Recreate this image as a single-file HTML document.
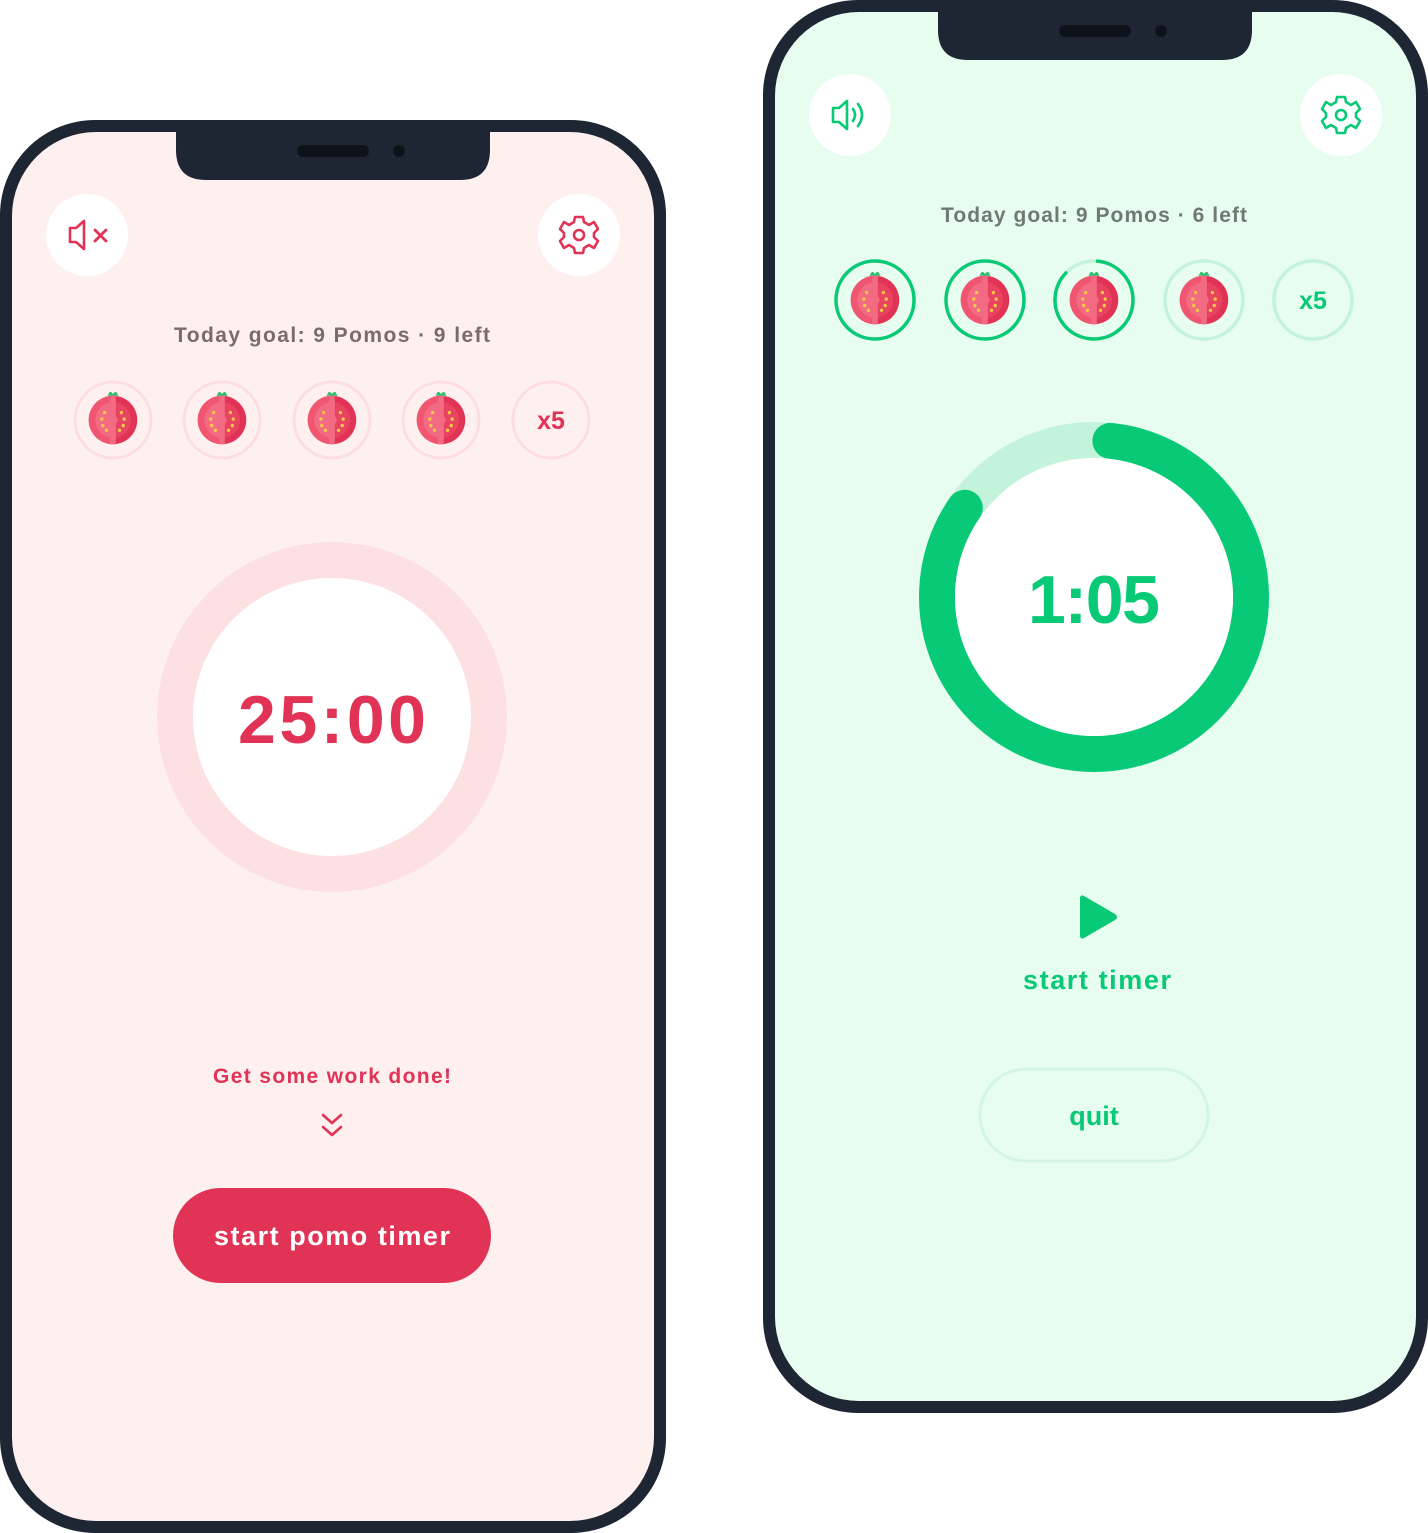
<!DOCTYPE html>
<html><head><meta charset="utf-8"><style>
html,body{margin:0;padding:0;background:#fff;}
svg{display:block}
text{font-family:"Liberation Sans",sans-serif;font-weight:bold}
</style></head><body>
<svg width="1428" height="1533" viewBox="0 0 1428 1533" xmlns="http://www.w3.org/2000/svg">
<defs>
<symbol id="tom" viewBox="-30 -30 60 60">
<path d="M-6 -26 L-3 -31 L0 -28 L3 -31 L6 -26 Z" fill="#2fbf71"/>
<circle r="26" fill="#e03355"/>
<path d="M0 -26 A26 26 0 0 0 0 26 Z" fill="#f0566f"/>
<circle r="19" fill="#f26b82"/>
<path d="M0 -19 A19 19 0 0 1 0 19 Z" fill="#e8445f"/>
<rect x="-3" y="-26" width="6" height="52" fill="#f26b82"/>
<circle r="5" fill="#f26b82"/>
<g fill="#f7c948">
<circle cx="-9" cy="-8" r="1.8"/><circle cx="-12" cy="-1" r="1.8"/><circle cx="-11" cy="6" r="1.8"/><circle cx="-7" cy="11" r="1.8"/>
<circle cx="9" cy="-8" r="1.8"/><circle cx="12" cy="-1" r="1.8"/><circle cx="11" cy="6" r="1.8"/><circle cx="7" cy="11" r="1.8"/>
</g>
</symbol>
</defs>

<!-- LEFT PHONE -->
<rect x="0" y="120" width="666" height="1413" rx="95" fill="#1f2633"/>
<rect x="12" y="132" width="642" height="1389" rx="84" fill="#fff0f0"/>
<path d="M176 132 H490 V150 Q490 180 460 180 H206 Q176 180 176 150 Z" fill="#1f2633"/>
<rect x="297" y="145" width="72" height="12" rx="6" fill="#0e131b"/>
<circle cx="399" cy="151" r="6" fill="#0e131b"/>

<circle cx="87" cy="235" r="41" fill="#fff"/>
<path d="M70 228 H76 L84 221 V249 L76 242 H70 Z" fill="none" stroke="#e03355" stroke-width="2.6" stroke-linejoin="round"/>
<path d="M95 230 L106 241 M106 230 L95 241" stroke="#e03355" stroke-width="2.8" stroke-linecap="round"/>
<circle cx="579" cy="235" r="41" fill="#fff"/>
<g transform="translate(579,235)" fill="none" stroke="#e03355" stroke-width="2.6">
<path d="M-4 -18 L4 -18 L5 -13 L10 -10 L15 -13 L19 -6 L15 -2 L15 2 L19 6 L15 13 L10 10 L5 13 L4 18 L-4 18 L-5 13 L-10 10 L-15 13 L-19 6 L-15 2 L-15 -2 L-19 -6 L-15 -13 L-10 -10 L-5 -13 Z" stroke-linejoin="round"/>
<circle r="5"/>
</g>

<text x="332" y="342" font-size="21" fill="#7b6a6c" text-anchor="middle" textLength="316">Today goal:  9 Pomos ·  9 left</text>

<g fill="none" stroke="#fcdede" stroke-width="3">
<circle cx="113" cy="420" r="38"/><circle cx="222" cy="420" r="38"/><circle cx="332" cy="420" r="38"/><circle cx="441" cy="420" r="38"/><circle cx="551" cy="420" r="38"/>
</g>
<use href="#tom" x="85" y="392" width="56" height="56"/>
<use href="#tom" x="194" y="392" width="56" height="56"/>
<use href="#tom" x="304" y="392" width="56" height="56"/>
<use href="#tom" x="413" y="392" width="56" height="56"/>
<text x="551" y="429" font-size="25" fill="#e03355" text-anchor="middle">x5</text>

<circle cx="332" cy="717" r="175" fill="#fde1e2"/>
<circle cx="332" cy="717" r="139" fill="#fff"/>
<text x="332" y="743" font-size="68" fill="#e03355" text-anchor="middle" textLength="188">25:00</text>

<text x="332" y="1083" font-size="21" fill="#e03355" text-anchor="middle" textLength="238">Get some work done!</text>
<path d="M323 1115 L332 1123 L341 1115 M323 1127 L332 1135 L341 1127" fill="none" stroke="#e03355" stroke-width="2.6" stroke-linecap="round" stroke-linejoin="round"/>

<rect x="173" y="1188" width="318" height="95" rx="47.5" fill="#e03355"/>
<text x="332" y="1245" font-size="27" fill="#fff" text-anchor="middle" textLength="236">start pomo timer</text>

<!-- RIGHT PHONE -->
<rect x="763" y="0" width="665" height="1413" rx="95" fill="#1f2633"/>
<rect x="775" y="12" width="641" height="1389" rx="84" fill="#e6fdf0"/>
<path d="M938 12 H1252 V30 Q1252 60 1222 60 H968 Q938 60 938 30 Z" fill="#1f2633"/>
<rect x="1059" y="25" width="72" height="12" rx="6" fill="#0e131b"/>
<circle cx="1161" cy="31" r="6" fill="#0e131b"/>

<circle cx="850" cy="115" r="41" fill="#fff"/>
<path d="M833 108 H839 L847 101 V129 L839 122 H833 Z" fill="none" stroke="#08c975" stroke-width="2.6" stroke-linejoin="round"/>
<path d="M853 109 Q857 115 853 121 M858 104 Q866 115 858 126" fill="none" stroke="#08c975" stroke-width="2.6" stroke-linecap="round"/>
<circle cx="1341" cy="115" r="41" fill="#fff"/>
<g transform="translate(1341,115)" fill="none" stroke="#08c975" stroke-width="2.6">
<path d="M-4 -18 L4 -18 L5 -13 L10 -10 L15 -13 L19 -6 L15 -2 L15 2 L19 6 L15 13 L10 10 L5 13 L4 18 L-4 18 L-5 13 L-10 10 L-15 13 L-19 6 L-15 2 L-15 -2 L-19 -6 L-15 -13 L-10 -10 L-5 -13 Z" stroke-linejoin="round"/>
<circle r="5"/>
</g>

<text x="1094" y="222" font-size="21" fill="#6f7a75" text-anchor="middle" textLength="306">Today goal: 9 Pomos · 6 left</text>

<g fill="none" stroke-width="3.5">
<circle cx="875" cy="300" r="39" stroke="#08c975"/>
<circle cx="985" cy="300" r="39" stroke="#08c975"/>
<circle cx="1094" cy="300" r="39" stroke="#c3f3da"/>
<circle cx="1094" cy="300" r="39" stroke="#08c975" stroke-linecap="round" stroke-dasharray="210 300" transform="rotate(-85 1094 300)"/>
<circle cx="1204" cy="300" r="39" stroke="#c3f3da"/>
<circle cx="1313" cy="300" r="39" stroke="#c3f3da"/>
</g>
<use href="#tom" x="847" y="272" width="56" height="56"/>
<use href="#tom" x="957" y="272" width="56" height="56"/>
<use href="#tom" x="1066" y="272" width="56" height="56"/>
<use href="#tom" x="1176" y="272" width="56" height="56"/>
<text x="1313" y="309" font-size="25" fill="#08c975" text-anchor="middle">x5</text>

<circle cx="1094" cy="597" r="157" fill="none" stroke="#c3f3da" stroke-width="36"/>
<circle cx="1094" cy="597" r="157" fill="none" stroke="#08c975" stroke-width="36" stroke-linecap="round" stroke-dasharray="818 1000" transform="rotate(-84 1094 597)"/>
<circle cx="1094" cy="597" r="139" fill="#fff"/>
<text x="1094" y="623" font-size="68" fill="#08c975" text-anchor="middle" textLength="132">1:05</text>

<path d="M1084 896 Q1080 894 1080 899 V935 Q1080 940 1084 938 L1115 920 Q1119 917 1115 914 Z" fill="#08c975"/>
<text x="1097" y="989" font-size="27" fill="#08c975" text-anchor="middle" textLength="148">start timer</text>

<rect x="980" y="1069" width="228" height="92" rx="46" fill="none" stroke="#d2f6e3" stroke-width="3"/>
<text x="1094" y="1125" font-size="27" fill="#08c975" text-anchor="middle">quit</text>
</svg>
</body></html>
